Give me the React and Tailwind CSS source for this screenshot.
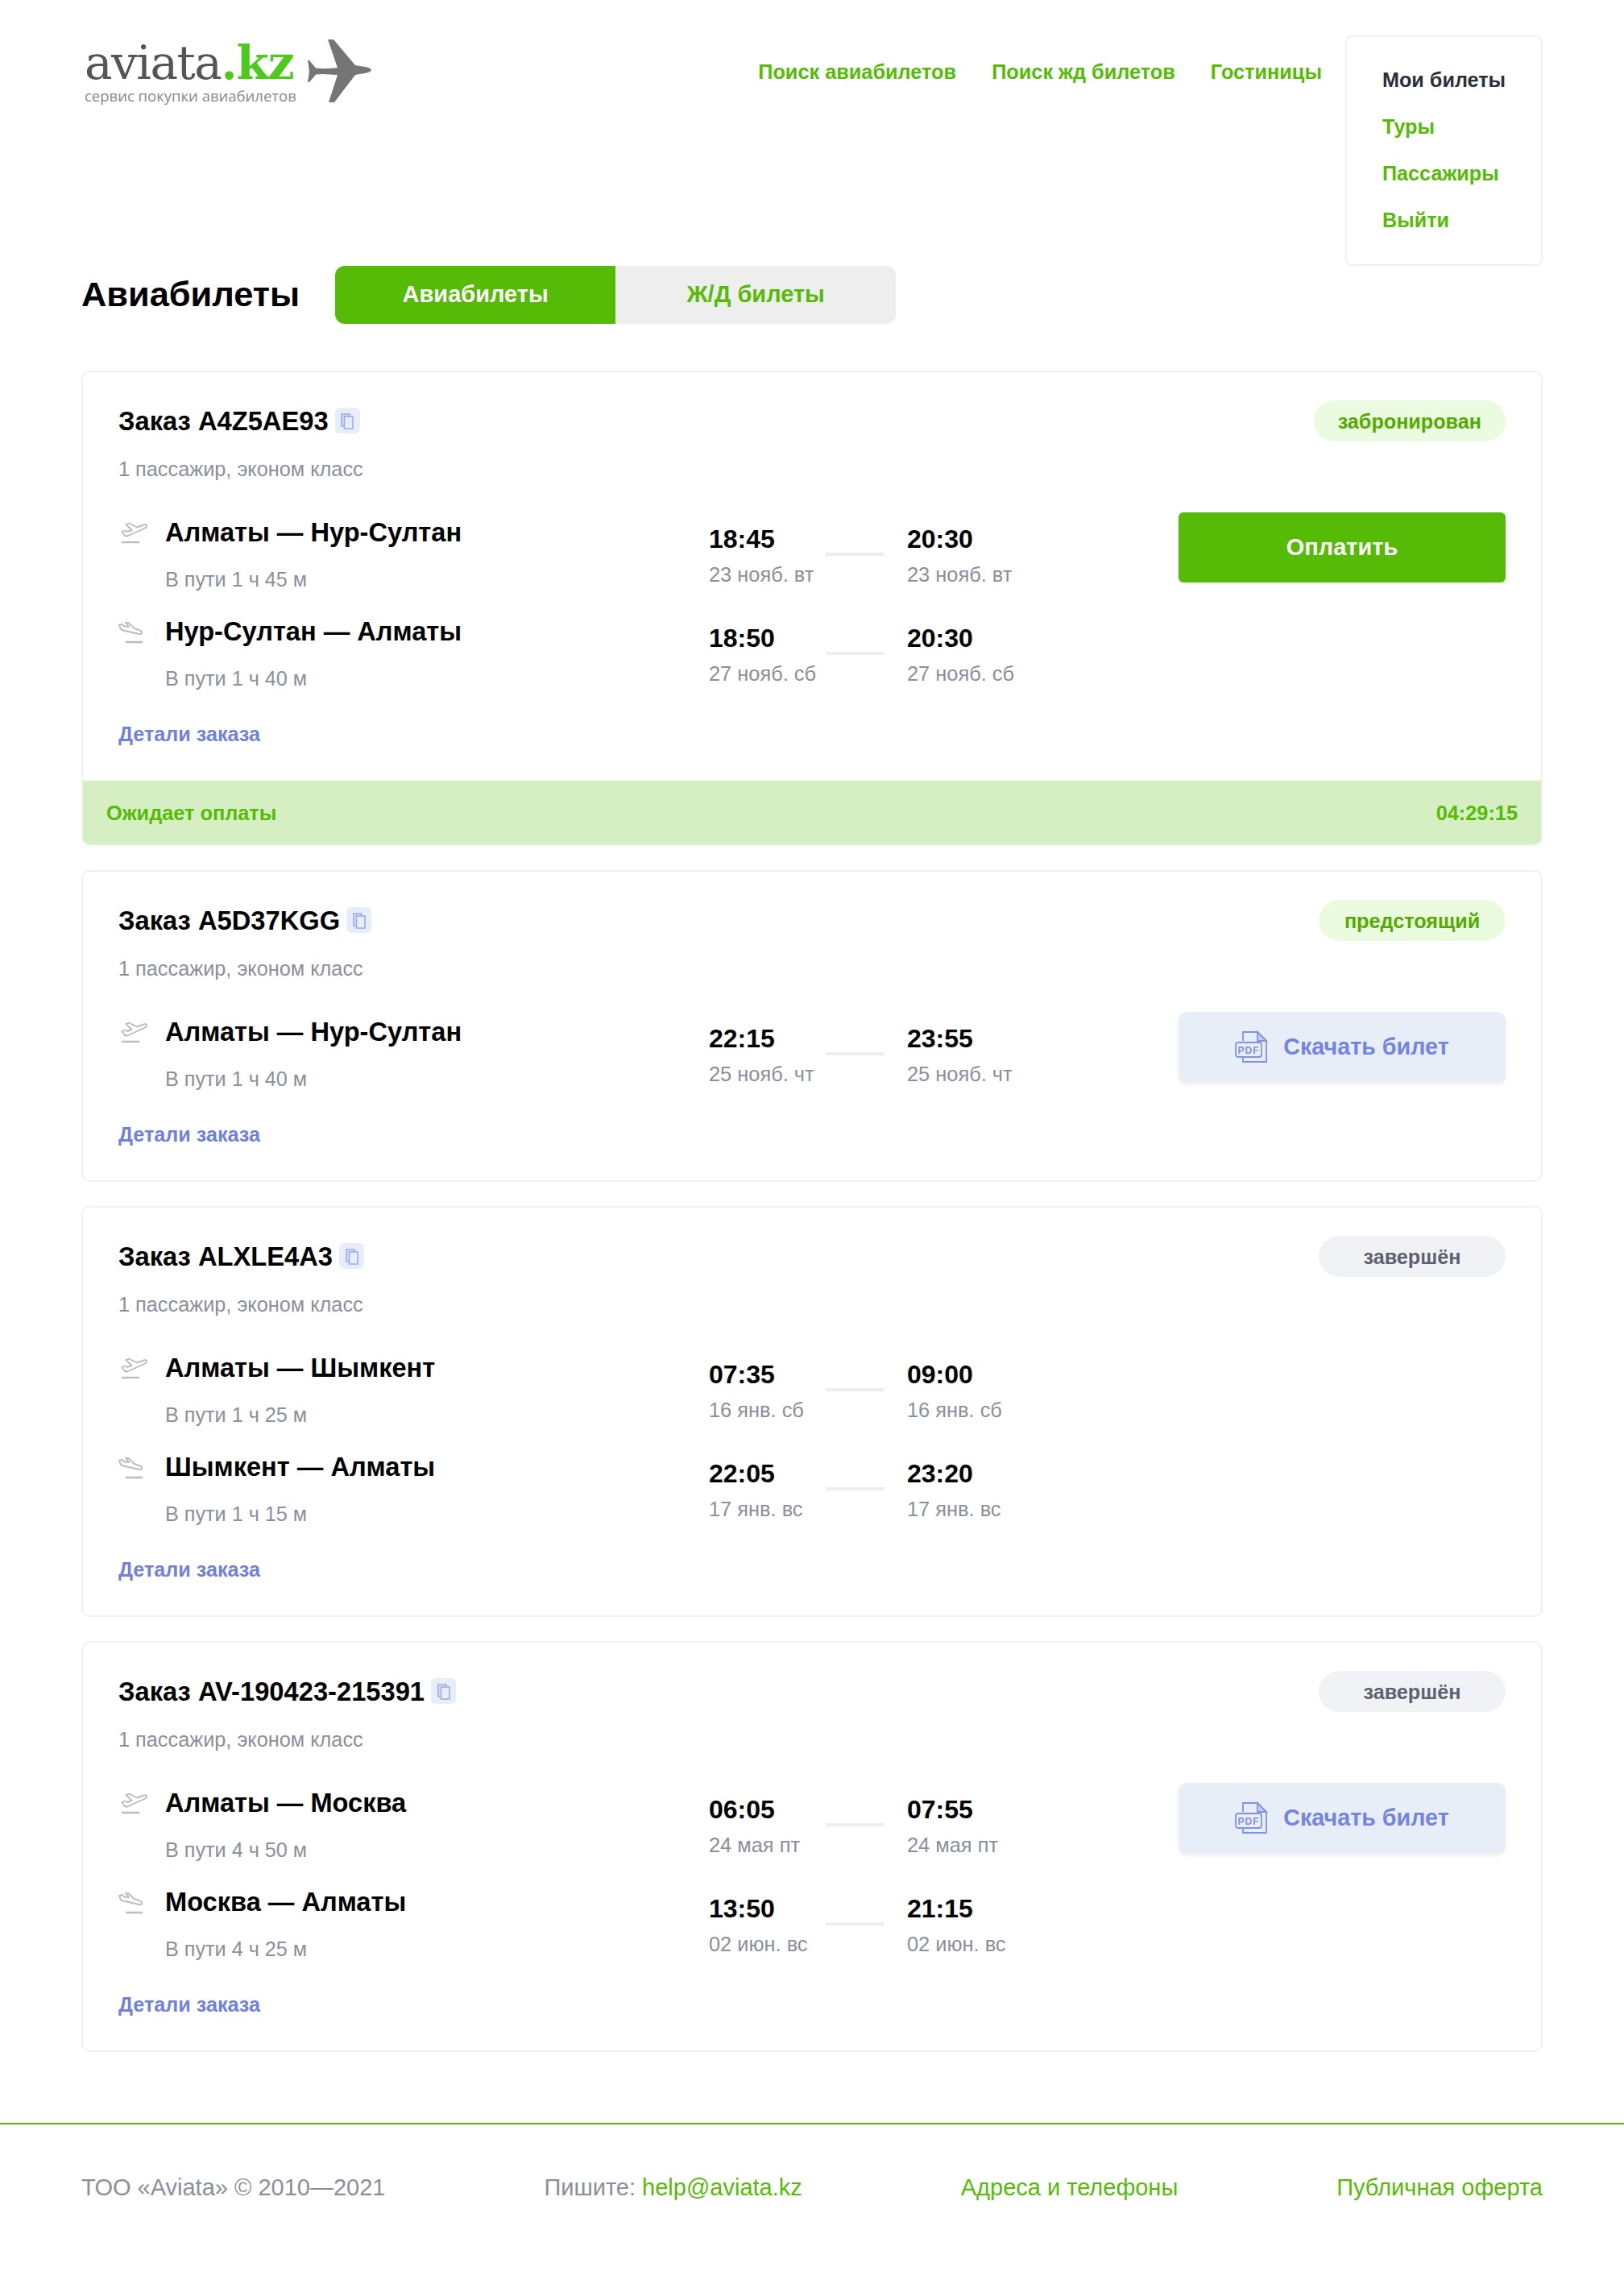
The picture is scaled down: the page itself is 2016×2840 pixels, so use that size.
import React from "react";

const Takeoff = () => (
  <svg width="34" height="30" viewBox="0 0 34 30" fill="none" stroke="#bcbcbc" strokeWidth="1.9" strokeLinejoin="round" strokeLinecap="round">
    <path d="M1.500 14L5 12.500L8 14L13.500 12L6.500 5L10 3.500L20 8.500L27 6C29.500 5 31.500 5 32 6C32.500 7.500 30.500 9.500 28 10.500L9 19C7 19.800 5.500 19.500 4.500 18.500Z" />
    <path d="M1 27H23" strokeWidth="2.400" strokeLinecap="butt" />
  </svg>
);
const Landing = () => (
  <svg width="32" height="28" viewBox="0 0 32 28" fill="none" stroke="#bcbcbc" strokeWidth="1.9" strokeLinejoin="round" strokeLinecap="round">
    <path d="M1 4L4.500 3L7.500 5.500L13 6L9 1L12.500 1.200L19.500 8L26 10.200C28 11 29.500 12.500 29 13.800C28.500 15.300 26 15.300 23.500 14.500L6 10.500C4 10 3 9 2.500 8Z" />
    <path d="M9 25H30" strokeWidth="2.400" strokeLinecap="butt" />
  </svg>
);
const CopyIcon = () => (
  <span className="flex h-[32px] w-[31px] items-center justify-center rounded-[6px] bg-[#e8eef8]">
    <svg width="16" height="21" viewBox="0 0 16 21" fill="none" stroke="#9aa8ec" strokeWidth="1.500">
      <path d="M1 2h10v15H1z" fill="#d5dcf6" />
      <path d="M4.500 5H15v15H4.500z" fill="#e8eef8" />
    </svg>
  </span>
);
const PdfIcon = () => (
  <svg width="42" height="42" viewBox="0 0 42 42" fill="none" stroke="#8192e6" strokeWidth="1.800">
    <path d="M10 13V2h18l11 11v26H10v-6" />
    <path d="M28 2v11h11z" fill="#c5cef2" />
    <rect x="1" y="15" width="32" height="18" rx="3" fill="#e8eef8" />
    <text x="17" y="28.500" textAnchor="middle" fontSize="12" fontWeight="700" fontFamily="Liberation Sans, sans-serif" fill="#8192e6" stroke="none" letterSpacing="1">PDF</text>
  </svg>
);
const LogoPlane = () => (
  <svg width="80" height="80" viewBox="0 0 80 80" fill="#757575">
    <path d="M25 0h7l27 32 15 2.500c3 .7 5 2.500 5 3.500s-2 2.500-5 3.200L59 44 33 78h-7l11-34-18-1-9 .5L2 53H0l2-13.500L0 26h2l8 9.500 9 .8 18-1z" />
  </svg>
);

const Flight = ({ dir, route, dur, t1, d1, t2, d2 }) => (
  <div className="flex h-[96px] items-start">
    <div className={dir === "out" ? "w-[58px] pt-[5px] pl-[3px]" : "w-[58px] pt-[8px]"}>{dir === "out" ? <Takeoff /> : <Landing />}</div>
    <div className="w-[675px]">
      <div className="h-[40px] text-[32.6px] leading-[40px] font-bold text-black">{route}</div>
      <div className="mt-[20px] h-[36px] text-[25.2px] leading-[36px] text-[#8b8f9b]">{dur}</div>
    </div>
    <div className="w-[145px] pt-[10px]">
      <div className="text-[32px] leading-[36px] font-bold text-black">{t1}</div>
      <div className="mt-[8px] whitespace-nowrap text-[25.4px] leading-[36px] text-[#8b8f9b]">{d1}</div>
    </div>
    <div className="mt-[45px] mr-[28px] h-[4px] w-[73px] bg-[#eeeeee]" />
    <div className="pt-[10px]">
      <div className="text-[32px] leading-[36px] font-bold text-black">{t2}</div>
      <div className="mt-[8px] whitespace-nowrap text-[25.4px] leading-[36px] text-[#8b8f9b]">{d2}</div>
    </div>
  </div>
);

const PayButton = () => (
  <div className="-mt-[5px] flex h-[87px] w-[406px] items-center justify-center rounded-[6px] bg-[#55bb06] text-[29px] font-bold text-white">Оплатить</div>
);
const PdfButton = () => (
  <div className="-mt-[5px] flex h-[87px] w-[406px] items-center justify-center gap-[18px] rounded-[10px] bg-[#e8eef8] text-[28.7px] font-bold text-[#7484e2] shadow-[0_3px_5px_rgba(0,0,0,0.08)]">
    <PdfIcon />
    <span>Скачать билет</span>
  </div>
);

const Card = ({ id, status, kind, flights, action, band }) => {
  const pill = kind === "green" ? "bg-[#ebfbe0] text-[#53ab00]" : "bg-[#f1f2f6] text-[#5c6270]";
  return (
    <div className="overflow-hidden rounded-[10px] border-2 border-[#f0f0f0]">
      <div className={band ? "px-[44px] pt-[35px] pb-[40px]" : "px-[44px] pt-[35px] pb-[39px]"}>
        <div className="flex h-[51px] items-center justify-between">
          <div className="flex items-center gap-[8px]">
            <span className="text-[32.7px] font-bold text-black">Заказ {id}</span>
            <CopyIcon />
          </div>
          <div className={"flex h-[51px] min-w-[232px] items-center justify-center rounded-full px-[30px] pt-[2px] text-[25.2px] font-bold " + pill}>{status}</div>
        </div>
        <div className="mt-[16px] h-[36px] text-[25.3px] leading-[36px] text-[#8b8f9b]">1 пассажир, эконом класс</div>
        <div className="mt-[41px] flex items-start justify-between">
          <div className="flex flex-col gap-[27px]">
            {flights.map((f, i) => (
              <Flight key={i} {...f} />
            ))}
          </div>
          {action === "pay" && <PayButton />}
          {action === "pdf" && <PdfButton />}
        </div>
        <div className="mt-[33px] h-[36px] text-[25.2px] leading-[36px] font-bold text-[#7080dd]">Детали заказа</div>
      </div>
      {band && (
        <div className="flex h-[79px] items-center justify-between bg-[#d6efc2] px-[29px] pt-[2px] text-[25.3px] font-bold text-[#55bb06]">
          <span>Ожидает оплаты</span>
          <span>04:29:15</span>
        </div>
      )}
    </div>
  );
};

const orders = [
  {
    id: "A4Z5AE93", status: "забронирован", kind: "green", action: "pay", band: true,
    flights: [
      { dir: "out", route: "Алматы — Нур-Султан", dur: "В пути 1 ч 45 м", t1: "18:45", d1: "23 нояб. вт", t2: "20:30", d2: "23 нояб. вт" },
      { dir: "in", route: "Нур-Султан — Алматы", dur: "В пути 1 ч 40 м", t1: "18:50", d1: "27 нояб. сб", t2: "20:30", d2: "27 нояб. сб" },
    ],
  },
  {
    id: "A5D37KGG", status: "предстоящий", kind: "green", action: "pdf",
    flights: [
      { dir: "out", route: "Алматы — Нур-Султан", dur: "В пути 1 ч 40 м", t1: "22:15", d1: "25 нояб. чт", t2: "23:55", d2: "25 нояб. чт" },
    ],
  },
  {
    id: "ALXLE4A3", status: "завершён", kind: "gray",
    flights: [
      { dir: "out", route: "Алматы — Шымкент", dur: "В пути 1 ч 25 м", t1: "07:35", d1: "16 янв. сб", t2: "09:00", d2: "16 янв. сб" },
      { dir: "in", route: "Шымкент — Алматы", dur: "В пути 1 ч 15 м", t1: "22:05", d1: "17 янв. вс", t2: "23:20", d2: "17 янв. вс" },
    ],
  },
  {
    id: "AV-190423-215391", status: "завершён", kind: "gray", action: "pdf",
    flights: [
      { dir: "out", route: "Алматы — Москва", dur: "В пути 4 ч 50 м", t1: "06:05", d1: "24 мая пт", t2: "07:55", d2: "24 мая пт" },
      { dir: "in", route: "Москва — Алматы", dur: "В пути 4 ч 25 м", t1: "13:50", d1: "02 июн. вс", t2: "21:15", d2: "02 июн. вс" },
    ],
  },
];

export default function App() {
  return (
    <div className="min-h-[2840px] bg-white font-['Liberation_Sans',sans-serif]">
      <div className="px-[101px]">
        <header className="flex items-start justify-between pt-[44px]">
          <div className="flex pt-[5px]">
            <div className="w-[281px] pl-[4px]">
              <div className="h-[58px] whitespace-nowrap font-['DejaVu_Serif',serif] text-[58px] leading-[58px] tracking-[-1.5px] text-[#555555]">
                aviata<span className="font-bold tracking-[-1px] text-[#4fc81f]">.kz</span>
              </div>
              <div className="whitespace-nowrap font-['Open_Sans',sans-serif] text-[18.500px] leading-[24px] text-[#8a8a8a]">сервис покупки авиабилетов</div>
            </div>
            <LogoPlane />
          </div>
          <div className="flex items-start">
            <nav className="mr-[29px] flex gap-[44px] pt-[30px] text-[25.3px] leading-[30px] font-bold text-[#55bb06]">
              <span>Поиск авиабилетов</span>
              <span>Поиск жд билетов</span>
              <span>Гостиницы</span>
            </nav>
            <div className="flex h-[286px] w-[245px] flex-col gap-[28px] rounded-[8px] border-2 border-[#f0f0f0] pt-[38px] pl-[44px] text-[25.2px] leading-[30px] font-bold text-[#55bb06]">
              <span className="text-[#2b2f3a]">Мои билеты</span>
              <span>Туры</span>
              <span>Пассажиры</span>
              <span>Выйти</span>
            </div>
          </div>
        </header>
        <div className="flex items-center gap-[44px]">
          <h1 className="text-[43.4px] font-bold text-black">Авиабилеты</h1>
          <div className="flex h-[72px] overflow-hidden rounded-[12px] text-[29px] font-bold">
            <div className="flex w-[348px] items-center justify-center bg-[#55bb06] text-white">Авиабилеты</div>
            <div className="flex w-[348px] items-center justify-center bg-[#eeeeee] text-[#55bb06]">Ж/Д билеты</div>
          </div>
        </div>
        <div className="mt-[58px] flex flex-col gap-[30px]">
          {orders.map((o) => (
            <Card key={o.id} {...o} />
          ))}
        </div>
      </div>
      <footer className="mt-[88px] flex justify-between border-t-2 border-[#55bb06] px-[101px] pt-[60px] text-[29px] leading-[36px] text-[#8b8f9b]">
        <span>ТОО «Aviata» © 2010—2021</span>
        <span>Пишите: <span className="text-[#55bb06]">help@aviata.kz</span></span>
        <span className="text-[#55bb06]">Адреса и телефоны</span>
        <span className="text-[#55bb06]">Публичная оферта</span>
      </footer>
    </div>
  );
}
